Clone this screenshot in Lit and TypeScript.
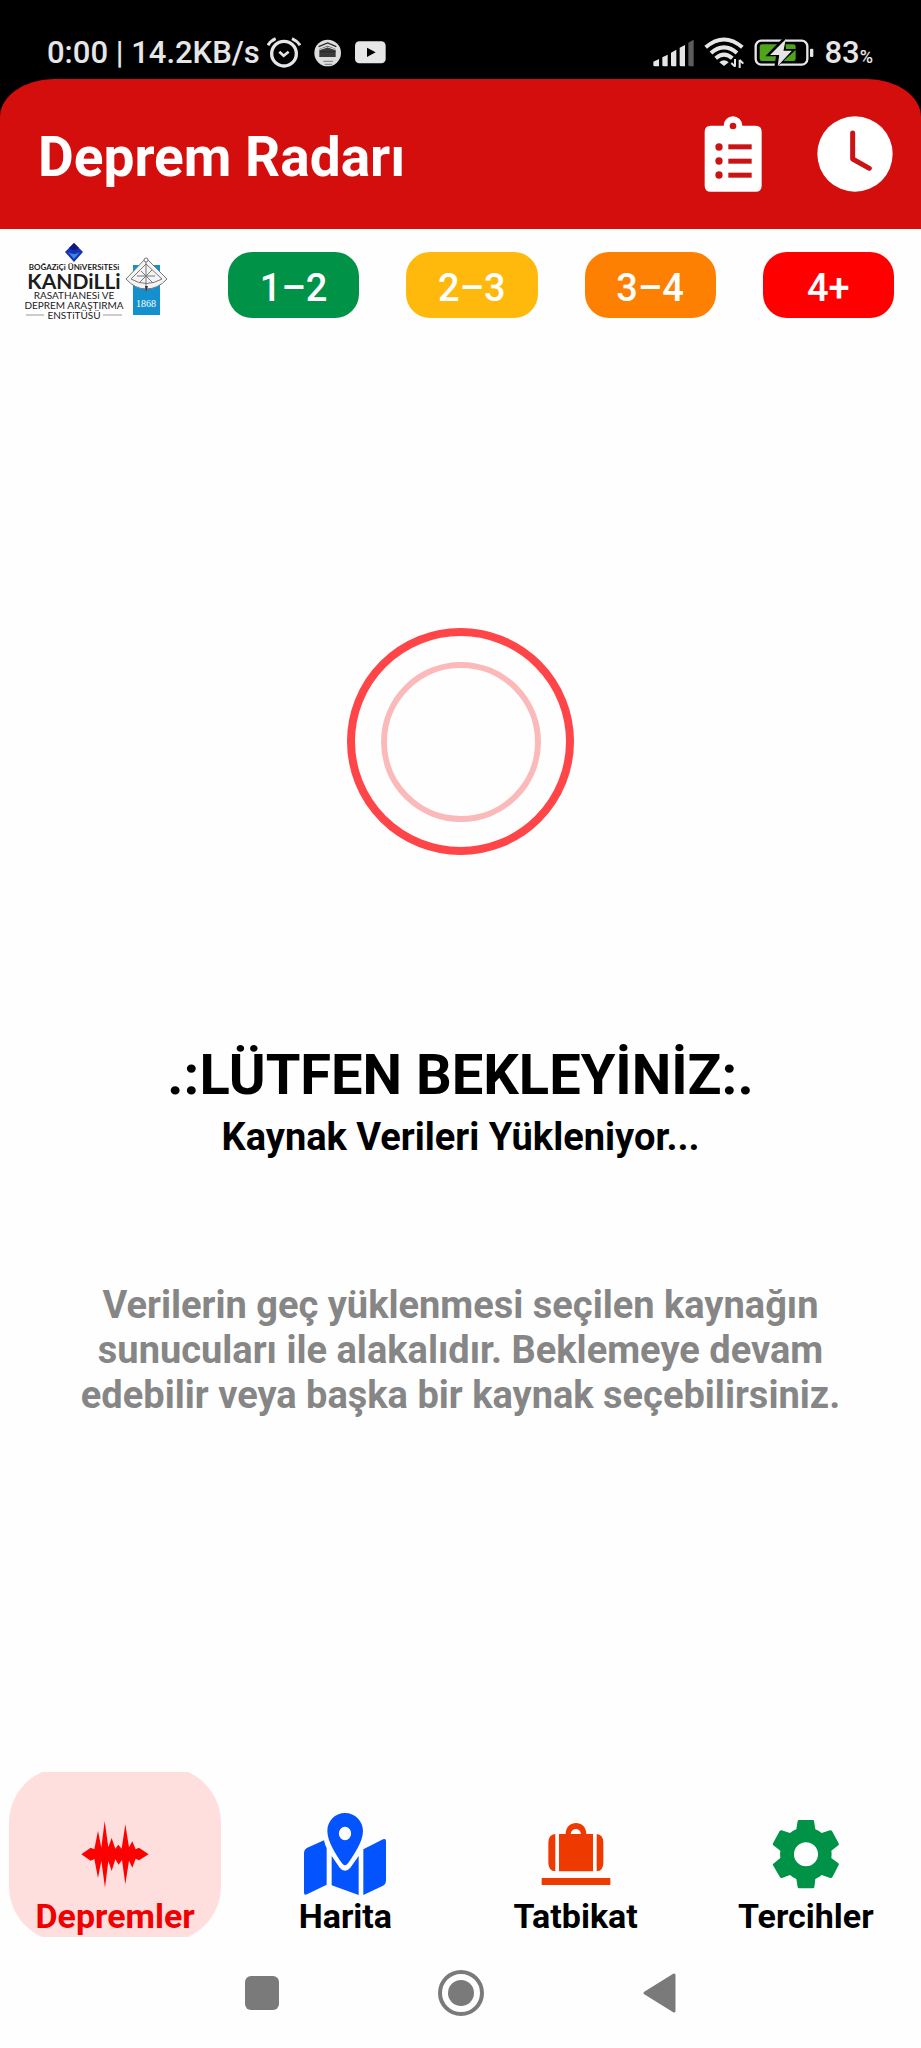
import { LitElement, html, css, svg } from "lit";
import { customElement, state } from "lit/decorators.js";
import { classMap } from "lit/directives/class-map.js";

const waveIcon = svg`
  <svg class="tab-icon" viewBox="222 159 246 246" aria-hidden="true">
    <path fill="#fe0000" d="M244 283 L272 263 L283 268 L294 212 L304 263 L314 183 L325 262 L335 234 L346 266 L355 254 L365 266 L376 193 L387 262 L397 244 L407 268 L417 263 L446 283 L417 301 L407 296 L397 323 L387 302 L376 373 L366 300 L356 314 L346 298 L335 333 L325 303 L315 383 L304 303 L294 354 L283 297 L272 302 Z"/>
  </svg>`;

const mapIcon = svg`
  <svg class="tab-icon" viewBox="913 159 246 246" aria-hidden="true">
    <g fill="#0353ff">
      <path fill-rule="evenodd" d="M1036 159 C1006 159 983 183 983 213 C983 245 1010 285 1027 310 Q1036 322 1045 310 C1062 285 1090 245 1090 213 C1090 183 1066 159 1036 159 Z M1036 200 A18 20 0 1 1 1036 241 A18 20 0 1 1 1036 200 Z"/>
      <path d="M973 241 Q976 256 981 264 L981 374 L922 403 Q913 407 913 398 L913 279 Q913 268 923 263 Z"/>
      <path d="M996 288 L1020 323 Q1036 342 1052 323 L1077 288 L1077 405 L996 376 Z"/>
      <path d="M1091 268 L1150 238 Q1159 234 1159 243 L1159 363 Q1159 372 1150 377 L1091 405 Z"/>
    </g>
  </svg>`;

const bagIcon = svg`
  <svg class="tab-icon" viewBox="224 159 246 246" aria-hidden="true">
    <g fill="#ee3900">
      <path d="M296 222 H316 C316 178 378 178 378 222 H398 V334 H296 Z M331 222 H362 C360 202 333 202 331 222 Z" fill-rule="evenodd"/>
      <path d="M285 222 V334 Q264 332 264 308 V248 Q264 224 285 222 Z"/>
      <path d="M409 222 V334 Q429 332 429 308 V248 Q429 224 409 222 Z"/>
      <rect x="244" y="354" width="206" height="21"/>
    </g>
  </svg>`;

const gearIcon = svg`
  <svg class="tab-icon" viewBox="915 159 246 246" aria-hidden="true">
    <path fill="#009347" fill-rule="evenodd" d="M1017 180 H1059 Q1062 180 1062 183 L1066 208 Q1076 212 1085 219 L1110 211 Q1114 210 1116 213 L1136 250 Q1138 253 1135 256 L1114 272 Q1116 283 1114 294 L1135 310 Q1138 312 1136 315 L1117 352 Q1115 355 1111 354 L1085 345 Q1076 353 1066 357 L1063 382 Q1062 385 1059 385 H1017 Q1014 385 1013 382 L1009 357 Q999 353 990 345 L966 354 Q962 355 960 352 L939 316 Q937 313 940 311 L961 294 Q959 283 961 272 L940 256 Q937 253 939 250 L959 213 Q961 210 965 211 L990 219 Q999 212 1009 208 L1013 183 Q1014 180 1017 180 Z M1038 247 A36 36 0 1 0 1038 319 A36 36 0 1 0 1038 247 Z"/>
  </svg>`;

const TABS = [
  { id: "quakes", label: "Depremler", icon: waveIcon },
  { id: "map", label: "Harita", icon: mapIcon },
  { id: "drill", label: "Tatbikat", icon: bagIcon },
  { id: "settings", label: "Tercihler", icon: gearIcon },
];

const LEVELS = [
  { label: "1–2", tone: "green" },
  { label: "2–3", tone: "yellow" },
  { label: "3–4", tone: "orange" },
  { label: "4+", tone: "red" },
];

@customElement("status-bar")
class StatusBar extends LitElement {
  static styles = css`
    :host {
      display: flex;
      align-items: center;
      justify-content: space-between;
      box-sizing: border-box;
      height: 79px;
      padding: 26px 48px 0 47px;
      background: #000;
      color: #e6e6e6;
      font-size: 31px;
      font-weight: 500;
      line-height: 38px;
    }
    .side {
      display: flex;
      align-items: center;
    }
    .left {
      gap: 12px;
    }
    .clock {
      margin-right: -5px;
    }
    .right {
      gap: 10px;
    }
    .icon {
      display: block;
      flex: none;
    }
    .battery-level {
      display: flex;
      align-items: baseline;
    }
    .percent {
      font-size: 18px;
      line-height: 20px;
    }
  `;

  render() {
    return html`
      <div class="side left">
        <span class="clock">0:00 | 14.2KB/s</span>
        <svg class="icon" width="34" height="32" viewBox="803 106 102 96" aria-label="Alarm">
          <circle cx="854" cy="156" r="37" fill="none" stroke="#e6e6e6" stroke-width="10" />
          <path d="M840 150 L853 162 L868 150" fill="none" stroke="#e6e6e6" stroke-width="8" />
          <path d="M806 131 Q813 118 829 111 M902 131 Q894 118 878 111" fill="none" stroke="#e6e6e6" stroke-width="9" />
        </svg>
        <svg class="icon" width="30" height="30" viewBox="941 108 90 90" aria-label="Bildirim">
          <circle cx="985" cy="153" r="40" fill="#dedede" />
          <path d="M960 141 L985 131 L1009 141 V165 H960 Z" fill="#3a3a3a" />
          <path d="M958 134 L985 123 L1011 134 M962 149 H1008" fill="none" stroke="#2a2a2a" stroke-width="4" />
          <path d="M960 143 L985 135 L1009 143" fill="none" stroke="#dedede" stroke-width="3" />
          <path d="M972 178 H1001 M976 187 H998" stroke="#8b8b8b" stroke-width="4" />
        </svg>
        <svg class="icon" width="31" height="23" viewBox="1067 119 93 69" aria-label="YouTube">
          <rect x="1067" y="120" width="92" height="66" rx="13" fill="#e6e6e6" />
          <path d="M1103 139 L1129 153 L1103 167 Z" fill="#000" />
        </svg>
      </div>
      <div class="side right">
        <svg class="icon" width="41" height="28" viewBox="588 113 123 84" aria-label="Sinyal">
          <g fill="#e6e6e6">
            <path d="M589 181 L606 173 V195 H593 Q589 195 589 191 Z" />
            <path d="M616 168 L632 160 V195 H620 Q616 195 616 191 Z" />
            <path d="M642 154 L658 145 V195 H646 Q642 195 642 191 Z" />
            <path d="M668 139 L684 131 V195 H672 Q668 195 668 191 Z" />
          </g>
          <path d="M694 124 L710 115 V195 H698 Q694 195 694 191 Z" fill="#5c5c5c" />
        </svg>
        <svg class="icon" width="40" height="31" viewBox="742 110 120 93" aria-label="Wi-Fi">
          <path d="M747 141 Q802 94 857 141 M763 158 Q802 124 841 158 M777 174 Q802 152 827 174" fill="none" stroke="#e6e6e6" stroke-width="12" />
          <path d="M788 186 Q802 173 816 186 L802 197 Z" fill="#e6e6e6" />
          <path d="M835 176 V199 M824 188 L835 199 M849 203 V178 M860 190 L849 179" fill="none" stroke="#e6e6e6" stroke-width="6" />
        </svg>
        <svg class="icon" width="60" height="28" viewBox="898 112 180 84" aria-label="Pil">
          <rect x="903" y="117" width="155" height="72" rx="17" fill="none" stroke="#e6e6e6" stroke-width="7" />
          <rect x="915" y="128" width="108" height="50" rx="7" fill="#4ea51c" />
          <rect x="1066" y="141" width="10" height="25" rx="3" fill="#e6e6e6" />
          <path d="M990 104 L932 164 H964 L958 204 L1026 142 H994 Z" fill="#000" />
          <path d="M990 119 L951 158 H976 L972 187 L1007 149 H984 Z" fill="#e6e6e6" stroke="#e6e6e6" stroke-width="4" />
        </svg>
        <span class="battery-level">83<span class="percent">%</span></span>
      </div>
    `;
  }
}

@customElement("app-header")
class AppHeader extends LitElement {
  static styles = css`
    :host {
      display: block;
      background: #000;
    }
    .bar {
      display: flex;
      align-items: center;
      gap: 46px;
      box-sizing: border-box;
      height: 150px;
      padding: 0 28px 0 38px;
      background: #d40e0c;
      border-radius: 54px 54px 0 0 / 38px 38px 0 0;
    }
    .title {
      flex: 1;
      margin: 0;
      padding-top: 5px;
      color: #fff;
      font-size: 55px;
      font-weight: 700;
      line-height: 64px;
    }
    .action {
      display: block;
      padding: 0;
      border: 0;
      background: none;
      cursor: pointer;
    }
    .action svg {
      display: block;
      width: 76px;
      height: 76px;
    }
  `;

  render() {
    return html`
      <header class="bar">
        <h1 class="title">Deprem Radarı</h1>
        <button class="action" aria-label="Liste">
          <svg viewBox="706 349 228 228" aria-hidden="true">
            <path fill="#fff" d="M753 378 H792 A28 28 0 0 1 848 378 H888 Q906 378 906 396 V558 Q906 576 888 576 H753 Q735 576 735 558 V396 Q735 378 753 378 Z" />
            <g fill="#cb1316">
              <circle cx="820" cy="379" r="10" />
              <circle cx="778" cy="442" r="11" />
              <circle cx="778" cy="484" r="11" />
              <circle cx="778" cy="526" r="11" />
              <rect x="806" y="434" width="70" height="15" />
              <rect x="806" y="477" width="70" height="15" />
              <rect x="806" y="519" width="70" height="15" />
            </g>
          </svg>
        </button>
        <button class="action" aria-label="Geçmiş">
          <svg viewBox="1072 349 228 228" aria-hidden="true">
            <circle cx="1186" cy="463" r="113" fill="#fff" />
            <path d="M1179 400 V478 L1229 506" fill="none" stroke="#cb1316" stroke-width="15" stroke-linecap="round" stroke-linejoin="round" />
          </svg>
        </button>
      </header>
    `;
  }
}

@customElement("magnitude-legend")
class MagnitudeLegend extends LitElement {
  static styles = css`
    :host {
      display: flex;
      align-items: center;
      gap: 47px;
      padding: 12px 27px 12px 24px;
    }
    .logo {
      display: block;
      flex: none;
      width: 157px;
      height: 88px;
    }
    .logo text {
      font-family: Lato, "Open Sans", sans-serif;
      fill: #1c1c1c;
      text-anchor: middle;
    }
    .university {
      font-size: 8px;
      font-weight: 700;
    }
    .institute {
      font-size: 21px;
      font-weight: 700;
    }
    .line {
      font-size: 10px;
    }
    .logo .year {
      font-family: "Liberation Serif", serif;
      font-size: 10px;
      fill: #fff;
    }
    .level {
      flex: 1;
      height: 66px;
      padding: 6px 0 0;
      border: 0;
      border-radius: 24px;
      color: #fff;
      font: inherit;
      font-size: 38px;
      font-weight: 500;
      line-height: 44px;
      cursor: pointer;
    }
    .green { background: #009347; }
    .yellow { background: #ffb90d; }
    .orange { background: #fe8002; }
    .red { background: #fe0000; }
  `;

  render() {
    return html`
      <svg class="logo" viewBox="24 241 157 88" role="img" aria-label="Kandilli Rasathanesi">
        <path d="M74 243 L83 252 L74 262 L65 252 Z" fill="#1a2fb4" />
        <path d="M74 243 L79 248 Q74 252 69 248 Z" fill="#0b1a7c" />
        <path d="M68 252 Q74 256 80 252 L74 259 Z" fill="#2c8fe0" />
        <text class="university" x="74" y="270">BOĞAZiÇi ÜNiVERSiTESi</text>
        <text class="institute" x="74" y="289">KANDiLLi</text>
        <text class="line" x="74" y="299">RASATHANESi VE</text>
        <text class="line" x="74" y="309">DEPREM ARAŞTIRMA</text>
        <text class="line" x="74" y="319">ENSTiTÜSÜ</text>
        <path d="M26 315 H44 M103 315 H122" stroke="#999" stroke-width="1" />
        <rect x="133" y="265" width="27" height="50" fill="#1590cf" />
        <path d="M146 258 L126 279 Q135 289 146 289 Q158 289 167 279 Z" fill="#f4f4f4" stroke="#777" stroke-width="1" />
        <path d="M146 264 L131 279 Q146 288 162 279 Z M146 258 V291 M137 276 H155 M140 282 L152 270 M141 271 L153 283" fill="none" stroke="#777" stroke-width="1" />
        <circle cx="146" cy="260" r="2" fill="#fff" stroke="#777" />
        <path d="M145 286 H148 L146 292 Z" fill="#333" />
        <text class="year" x="146" y="307">1868</text>
      </svg>
      ${LEVELS.map((l) => html`<button class="level ${l.tone}">${l.label}</button>`)}
    `;
  }
}

@customElement("loading-panel")
class LoadingPanel extends LitElement {
  static styles = css`
    :host {
      display: flex;
      flex: 1;
      flex-direction: column;
      align-items: center;
      padding: 287px 60px 0;
      text-align: center;
    }
    .ring {
      display: grid;
      place-items: center;
      box-sizing: border-box;
      width: 227px;
      height: 227px;
      border: 8px solid #ff4548;
      border-radius: 50%;
    }
    .ring-inner {
      box-sizing: border-box;
      width: 160px;
      height: 160px;
      border: 6px solid #fbb9ba;
      border-radius: 50%;
    }
    .title {
      margin: 187px 0 0;
      color: #000;
      font-size: 56px;
      font-weight: 700;
      line-height: 66px;
    }
    .subtitle {
      margin: 7px 0 0;
      color: #000;
      font-size: 38px;
      font-weight: 700;
      line-height: 44px;
    }
    .note {
      max-width: 780px;
      margin: 124px 0 0;
      color: #868686;
      font-size: 38px;
      font-weight: 700;
      line-height: 45px;
    }
  `;

  render() {
    return html`
      <div class="ring" role="progressbar" aria-label="Yükleniyor"><div class="ring-inner"></div></div>
      <h2 class="title">.:LÜTFEN BEKLEYİNİZ:.</h2>
      <p class="subtitle">Kaynak Verileri Yükleniyor...</p>
      <p class="note">
        Verilerin geç yüklenmesi seçilen kaynağın sunucuları ile alakalıdır. Beklemeye devam
        edebilir veya başka bir kaynak seçebilirsiniz.
      </p>
    `;
  }
}

@customElement("tab-bar")
class TabBar extends LitElement {
  @state() private active = "quakes";

  static styles = css`
    :host {
      display: block;
    }
    .tabs {
      display: grid;
      grid-template-columns: repeat(4, 1fr);
    }
    .tab {
      position: relative;
      display: flex;
      flex-direction: column;
      align-items: center;
      margin: 0 9px;
      padding: 41px 0 0;
      border: 0;
      background: none;
      color: #000;
      font: inherit;
      font-size: 34px;
      font-weight: 700;
      line-height: 42px;
      overflow: hidden;
      cursor: pointer;
    }
    .tab.active {
      color: #f00000;
    }
    .tab.active::before {
      content: "";
      position: absolute;
      inset: -5px 0;
      border-radius: 56px;
      background: #ffdede;
    }
    .tab-icon,
    .label {
      position: relative;
    }
    .tab-icon {
      display: block;
      width: 82px;
      height: 82px;
    }
  `;

  render() {
    return html`
      <nav class="tabs">
        ${TABS.map(
          (t) => html`
            <button
              class=${classMap({ tab: true, active: t.id === this.active })}
              @click=${() => (this.active = t.id)}
            >
              ${t.icon}
              <span class="label">${t.label}</span>
            </button>
          `
        )}
      </nav>
    `;
  }
}

@customElement("system-bar")
class SystemBar extends LitElement {
  static styles = css`
    :host {
      display: flex;
      justify-content: center;
      align-items: center;
      gap: 139px;
      height: 111px;
    }
    .key {
      display: block;
      padding: 0;
      border: 0;
      background: none;
      cursor: pointer;
    }
    .key svg {
      display: block;
      width: 60px;
      height: 60px;
    }
  `;

  render() {
    return html`
      <button class="key" aria-label="Son uygulamalar">
        <svg viewBox="0 0 60 60"><rect x="13" y="13" width="34" height="34" rx="6" fill="#7a7a7a" /></svg>
      </button>
      <button class="key" aria-label="Ana ekran">
        <svg viewBox="0 0 60 60">
          <circle cx="30" cy="30" r="21" fill="none" stroke="#7a7a7a" stroke-width="4" />
          <circle cx="30" cy="30" r="13" fill="#7a7a7a" />
        </svg>
      </button>
      <button class="key" aria-label="Geri">
        <svg viewBox="0 0 60 60">
          <path d="M15 30 L44 12 V48 Z" fill="#7a7a7a" stroke="#7a7a7a" stroke-width="3" stroke-linejoin="round" />
        </svg>
      </button>
    `;
  }
}

@customElement("app-root")
class AppRoot extends LitElement {
  static styles = css`
    :host {
      display: flex;
      flex-direction: column;
      min-height: 100vh;
      background: #fefefe;
      font-family: Roboto, "Noto Sans", sans-serif;
    }
  `;

  render() {
    return html`
      <status-bar></status-bar>
      <app-header></app-header>
      <magnitude-legend></magnitude-legend>
      <loading-panel></loading-panel>
      <tab-bar></tab-bar>
      <system-bar></system-bar>
    `;
  }
}
